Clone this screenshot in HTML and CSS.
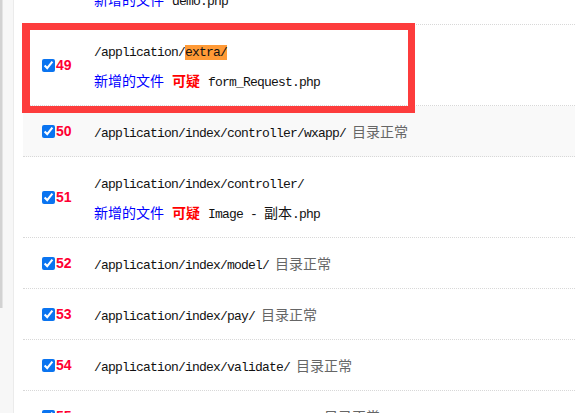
FILE: index.html
```html
<!DOCTYPE html>
<html lang="zh">
<head>
<meta charset="utf-8">
<title>文件检测</title>
<link rel="stylesheet" href="styles.css">
</head>
<body>
<div class="page">
  <aside class="side"><div class="thumb"></div></aside>
  <main class="main">
    <div class="list">
      <div class="row">
        <div class="idx"><input type="checkbox" class="chk" checked><span class="num">48</span></div>
        <div class="lines">
          <div class="line"><span class="path">/application/</span></div>
          <div class="line"><span class="add">新增的文件</span><span class="path">demo.php</span></div>
        </div>
      </div>
      <div class="row">
        <div class="idx"><input type="checkbox" class="chk" checked><span class="num">49</span></div>
        <div class="lines">
          <div class="line"><span class="path">/application/<span class="hl">extra/</span></span></div>
          <div class="line"><span class="add">新增的文件</span><span class="sus">可疑</span><span class="path">form_Request.php</span></div>
        </div>
      </div>
      <div class="row hover">
        <div class="idx"><input type="checkbox" class="chk" checked><span class="num">50</span></div>
        <div class="lines">
          <div class="line"><span class="path">/application/index/controller/wxapp/</span><span class="ok">目录正常</span></div>
        </div>
      </div>
      <div class="row">
        <div class="idx"><input type="checkbox" class="chk" checked><span class="num">51</span></div>
        <div class="lines">
          <div class="line"><span class="path">/application/index/controller/</span></div>
          <div class="line"><span class="add">新增的文件</span><span class="sus">可疑</span><span class="path">Image - <span class="cjk">副本</span>.php</span></div>
        </div>
      </div>
      <div class="row">
        <div class="idx"><input type="checkbox" class="chk" checked><span class="num">52</span></div>
        <div class="lines">
          <div class="line"><span class="path">/application/index/model/</span><span class="ok">目录正常</span></div>
        </div>
      </div>
      <div class="row">
        <div class="idx"><input type="checkbox" class="chk" checked><span class="num">53</span></div>
        <div class="lines">
          <div class="line"><span class="path">/application/index/pay/</span><span class="ok">目录正常</span></div>
        </div>
      </div>
      <div class="row">
        <div class="idx"><input type="checkbox" class="chk" checked><span class="num">54</span></div>
        <div class="lines">
          <div class="line"><span class="path">/application/index/validate/</span><span class="ok">目录正常</span></div>
        </div>
      </div>
      <div class="row">
        <div class="idx"><input type="checkbox" class="chk" checked><span class="num">55</span></div>
        <div class="lines">
          <div class="line"><span class="path">/application/install/controller/</span><span class="ok">目录正常</span></div>
        </div>
      </div>
    </div>
    <div class="mark"></div>
  </main>
</div>
</body>
</html>
```

FILE: styles.css
```css
html, body {
  margin: 0;
  padding: 0;
  background: #fff;
}
body {
  font-family: "Noto Sans CJK SC", "Liberation Sans", sans-serif;
  font-size: 14px;
  color: #000;
  overflow: hidden;
}
.page {
  display: flex;
  height: 413px;
  overflow: hidden;
}
.side {
  flex: none;
  width: 13px;
  background: #f7f7f7;
  border-right: 1px solid #ebebeb;
  display: flex;
  flex-direction: column;
}
.thumb {
  width: 2px;
  height: 308px;
  background: #d2d2d2;
  border-right: 1px solid #e4e4e4;
}
.main {
  flex: 1;
  position: relative;
  padding-left: 9px;
  min-width: 0;
}
.list {
  margin-top: -56px;
}
.row {
  display: flex;
  align-items: center;
  padding: 10px 0;
  border-bottom: 1px dotted #d8d8d8;
}
.row.hover {
  background: #f9f9f9;
}
.idx {
  flex: none;
  width: 71px;
  box-sizing: border-box;
  padding-left: 19px;
  display: flex;
  align-items: center;
}
.chk {
  margin: 0;
  width: 13px;
  height: 13px;
  accent-color: #0a74f0;
}
.num {
  margin-left: 1px;
  font-family: "Liberation Sans", sans-serif;
  font-weight: bold;
  font-size: 14px;
  color: #f03;
}
.lines {
  line-height: 30px;
  white-space: nowrap;
}
.line {
  height: 30px;
}
.path {
  font-family: "Liberation Mono", "Noto Sans CJK SC", monospace;
  font-size: 13px;
  letter-spacing: -0.8px;
  color: #111;
}
.cjk {
  font-family: "Noto Sans CJK SC", sans-serif;
  font-size: 14px;
  letter-spacing: 0;
}
.hl {
  background: #ff9a36;
}
.add {
  color: #0000ff;
  margin-right: 8px;
}
.sus {
  color: #f00;
  font-weight: bold;
  margin-right: 8px;
}
.ok {
  color: #666;
  margin-left: 6px;
}
.mark {
  position: absolute;
  left: 8px;
  top: 23px;
  width: 393px;
  height: 90px;
  box-sizing: border-box;
  border: 7px solid #fd3c3c;
  border-left-width: 8px;
}
```
